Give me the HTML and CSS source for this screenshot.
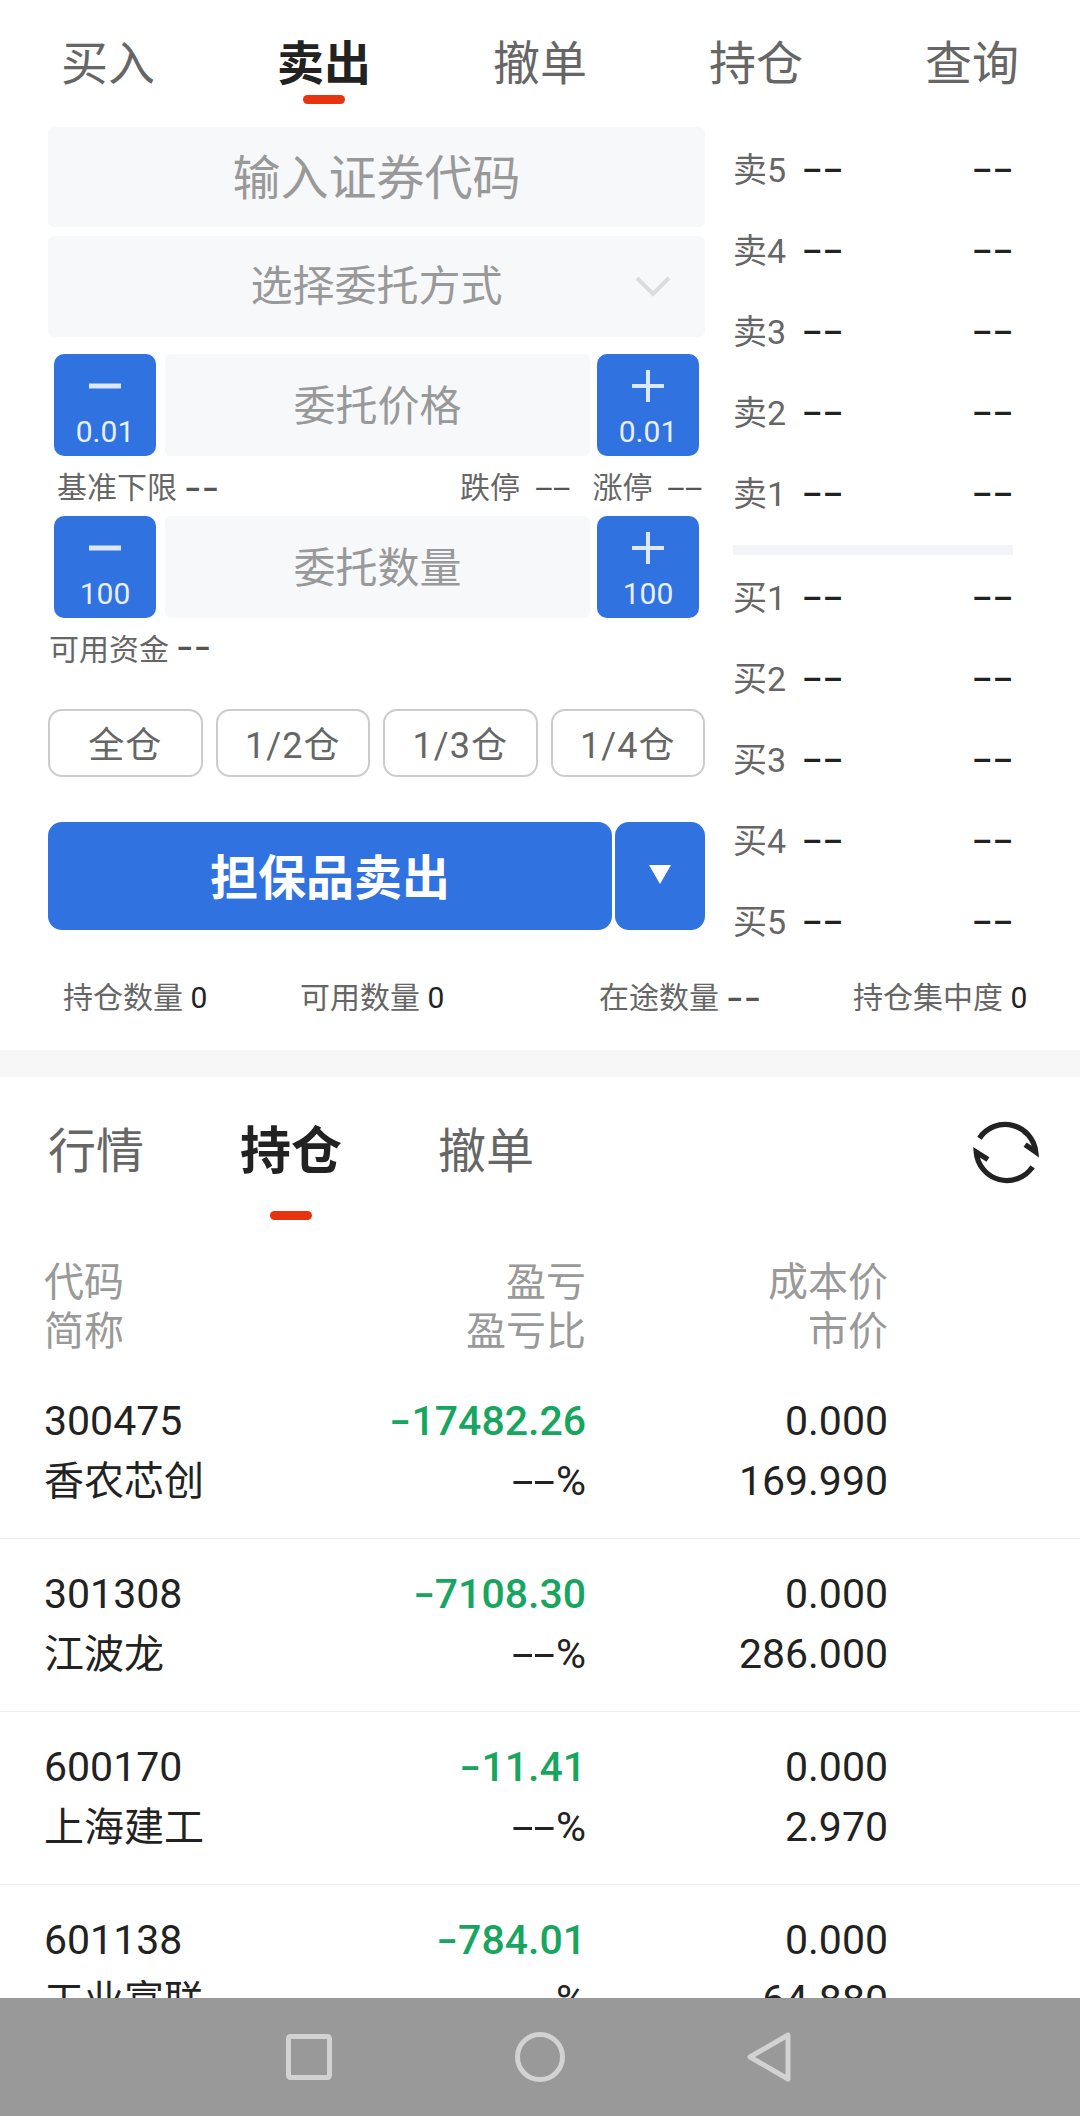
FILE: index.html
```html
<!DOCTYPE html>
<html lang="zh-CN">
<head>
  <meta charset="UTF-8"/>
  <meta name="viewport" content="width=device-width,initial-scale=1"/>
  <title>担保品卖出</title>
  <link rel="stylesheet" href="styles.css">
</head>
<body>
  <div class="page">
    <div class="top-tabs">
      <div class="top-tab">买入</div>
      <div class="top-tab active">卖出</div>
      <div class="top-tab">撤单</div>
      <div class="top-tab">持仓</div>
      <div class="top-tab">查询</div>
    </div>

    <div class="trade">
      <div class="form">
        <div class="field code-field">输入证券代码</div>
        <div class="field mode-field">选择委托方式
          <svg class="chevron" width="36" height="22" viewBox="0 0 36 22"><path d="M2 3 L18 19 L34 3" fill="none" stroke="#dcdcdc" stroke-width="4"/></svg>
        </div>

        <div class="stepper">
          <div class="step-btn">
            <svg width="34" height="34" viewBox="0 0 34 34"><path d="M1 17H33" stroke="#dbe8ff" stroke-width="5"/></svg>
            <span>0.01</span>
          </div>
          <div class="step-input">委托价格</div>
          <div class="step-btn">
            <svg width="34" height="34" viewBox="0 0 34 34"><path d="M1 17H33M17 1V33" stroke="#dbe8ff" stroke-width="4"/></svg>
            <span>0.01</span>
          </div>
        </div>
        <div class="limits">
          <span class="limit-base">基准下限 <b class="dash-s">--</b></span>
          <span>跌停 <b class="dash-s light">--</b></span>
          <span>涨停 <b class="dash-s light">--</b></span>
        </div>

        <div class="stepper">
          <div class="step-btn">
            <svg width="34" height="34" viewBox="0 0 34 34"><path d="M1 17H33" stroke="#dbe8ff" stroke-width="5"/></svg>
            <span>100</span>
          </div>
          <div class="step-input">委托数量</div>
          <div class="step-btn">
            <svg width="34" height="34" viewBox="0 0 34 34"><path d="M1 17H33M17 1V33" stroke="#dbe8ff" stroke-width="4"/></svg>
            <span>100</span>
          </div>
        </div>
        <div class="funds">可用资金 <b class="dash-s">--</b></div>

        <div class="ratios">
          <div class="ratio">全仓</div>
          <div class="ratio">1/2仓</div>
          <div class="ratio">1/3仓</div>
          <div class="ratio">1/4仓</div>
        </div>

        <div class="submit-row">
          <div class="submit">担保品卖出</div>
          <div class="submit-more"><i class="caret"></i></div>
        </div>
      </div>

      <div class="book">
        <div class="book-row"><span class="book-label">卖5</span><span class="dash">--</span><span class="dash">--</span></div>
        <div class="book-row"><span class="book-label">卖4</span><span class="dash">--</span><span class="dash">--</span></div>
        <div class="book-row"><span class="book-label">卖3</span><span class="dash">--</span><span class="dash">--</span></div>
        <div class="book-row"><span class="book-label">卖2</span><span class="dash">--</span><span class="dash">--</span></div>
        <div class="book-row"><span class="book-label">卖1</span><span class="dash">--</span><span class="dash">--</span></div>
        <div class="book-sep"></div>
        <div class="book-row"><span class="book-label">买1</span><span class="dash">--</span><span class="dash">--</span></div>
        <div class="book-row"><span class="book-label">买2</span><span class="dash">--</span><span class="dash">--</span></div>
        <div class="book-row"><span class="book-label">买3</span><span class="dash">--</span><span class="dash">--</span></div>
        <div class="book-row"><span class="book-label">买4</span><span class="dash">--</span><span class="dash">--</span></div>
        <div class="book-row"><span class="book-label">买5</span><span class="dash">--</span><span class="dash">--</span></div>
      </div>
    </div>

    <div class="stats">
      <span>持仓数量 <em>0</em></span>
      <span>可用数量 <em>0</em></span>
      <span>在途数量 <b class="dash-s">--</b></span>
      <span>持仓集中度 <em>0</em></span>
    </div>

    <div class="gap-bar"></div>

    <div class="sub-tabs">
      <div class="sub-tab">行情</div>
      <div class="sub-tab active">持仓</div>
      <div class="sub-tab">撤单</div>
      <svg class="refresh" width="68" height="68" viewBox="0 0 64 64" fill="none" stroke="#222" stroke-width="5">
        <path d="M7 19 A29 29 0 0 1 60 32 L50 25"/>
        <path d="M57 46 A29 29 0 0 1 4 32 L15 39"/>
      </svg>
    </div>

    <div class="holdings">
      <div class="head">
        <div>代码<br>简称</div>
        <div class="num">盈亏<br>盈亏比</div>
        <div class="num">成本价<br>市价</div>
      </div>

      <div class="row">
        <div>300475<br><span class="name">香农芯创</span></div>
        <div class="num"><span class="green"><i class="minus">-</i>17482.26</span><br><i class="pct">--</i>%</div>
        <div class="num">0.000<br>169.990</div>
      </div>
      <div class="row">
        <div>301308<br><span class="name">江波龙</span></div>
        <div class="num"><span class="green"><i class="minus">-</i>7108.30</span><br><i class="pct">--</i>%</div>
        <div class="num">0.000<br>286.000</div>
      </div>
      <div class="row">
        <div>600170<br><span class="name">上海建工</span></div>
        <div class="num"><span class="green"><i class="minus">-</i>11.41</span><br><i class="pct">--</i>%</div>
        <div class="num">0.000<br>2.970</div>
      </div>
      <div class="row">
        <div>601138<br><span class="name">工业富联</span></div>
        <div class="num"><span class="green"><i class="minus">-</i>784.01</span><br><i class="pct">--</i>%</div>
        <div class="num">0.000<br>64.880</div>
      </div>
    </div>

    <div class="navbar">
      <svg width="50" height="50" viewBox="0 0 50 50" fill="none" stroke="#d2d2d2" stroke-width="5"><rect x="4.5" y="4.5" width="41" height="41" rx="2"/></svg>
      <svg width="50" height="50" viewBox="0 0 50 50" fill="none" stroke="#d2d2d2" stroke-width="5"><circle cx="25" cy="25" r="22.5"/></svg>
      <svg width="50" height="50" viewBox="0 0 50 50" fill="none" stroke="#d2d2d2" stroke-width="5" stroke-linejoin="round"><path d="M42 3 V47 L4 25 Z"/></svg>
    </div>
  </div>
</body>
</html>
```

FILE: styles.css
```css
*, *::before, *::after { box-sizing: border-box; margin:0; padding:0 }
html, body { height:100%; overflow:hidden }
body {
  font-family:Roboto,"Noto Sans CJK SC",sans-serif;
  background:#fff;
  color:#222;
}
.page {
  width:1080px; height:2116px;
  display:flex; flex-direction:column;
  overflow:hidden;
}

/* top tabs */
.top-tabs {
  height:127px; flex:none;
  display:grid; grid-template-columns:repeat(5,216px);
}
.top-tab {
  display:flex; flex-direction:column; align-items:center;
  padding-top:38px;
  font-size:47px; line-height:52px;
  color:#666;
}
.top-tab.active { color:#222; font-weight:700; }
.top-tab.active::after {
  content:'';
  width:42px; height:9px;
  margin-top:5px;
  border-radius:5px;
  background:#e8340e;
}

/* order form */
.trade { display:flex; height:835px; flex:none; }
.form { width:657px; margin-left:48px; flex:none; }
.field {
  position:relative;
  display:flex; align-items:center; justify-content:center;
  padding-bottom:6px;
  background:#f7f8fa;
  border-radius:6px;
  color:#999;
}
.code-field { height:100px; font-size:48px; }
.mode-field { height:101px; margin-top:9px; padding-bottom:8px; font-size:42px; }
.chevron { position:absolute; left:587px; top:39px; }
.stepper {
  display:flex;
  height:102px;
  padding:0 6px;
}
.mode-field + .stepper { margin-top:17px; }
.step-btn {
  width:102px; flex:none;
  display:flex; flex-direction:column; align-items:center;
  padding-top:15px;
  background:#2f72e0;
  border-radius:10px;
  color:#e8f0ff;
  font-size:30px; line-height:32px;
}
.step-btn span { margin-top:13px; }
.step-input {
  flex:1;
  margin:0 7px 0 9px;
  padding-bottom:5px;
  display:flex; align-items:center; justify-content:center;
  background:#f7f8fa;
  border-radius:6px;
  font-size:42px;
  color:#999;
}
.limits {
  height:60px;
  display:flex; align-items:center; gap:20px;
  padding-left:9px;
  padding-bottom:2px;
  font-size:30px; color:#666;
}
.limit-base { margin-right:auto; }
.dash-s {
  display:inline-block;
  width:28px;
  font-family:Roboto,sans-serif; font-weight:700;
  color:#555;
  transform:scaleX(1.5);
  transform-origin:0 50%;
}
.dash-s.light { font-weight:400; width:38px; margin-left:7px; transform:scaleX(2.15); }
.funds {
  height:62px;
  display:flex; align-items:center; gap:7px;
  padding-left:1px;
  padding-bottom:5px;
  font-size:30px; color:#666;
}
.ratios {
  display:grid; grid-template-columns:repeat(4,1fr); gap:13px;
  margin-top:29px;
}
.ratio {
  height:68px;
  display:flex; align-items:center; justify-content:center;
  padding-bottom:2px;
  border:2px solid #ccc;
  border-radius:14px;
  font-size:36px; color:#666;
  letter-spacing:1px;
}
.submit-row { display:flex; gap:3px; margin-top:45px; }
.submit {
  width:564px; height:108px;
  display:flex; align-items:center; justify-content:center;
  padding-bottom:5px;
  background:#2f72e0;
  border-radius:14px;
  font-size:48px; font-weight:700;
  color:#fff;
}
.submit-more {
  flex:1;
  display:flex; align-items:center; justify-content:center;
  padding-bottom:4px;
  background:#2f72e0;
  border-radius:14px;
}
.caret {
  width:0; height:0;
  border-left:11px solid transparent;
  border-right:11px solid transparent;
  border-top:19px solid #fff;
}

/* five-level quote */
.book { width:280px; margin-left:28px; flex:none; }
.book-row {
  height:81px;
  display:flex; align-items:center;
}
.book-label { width:69px; font-size:34px; color:#666; }
.dash {
  width:36px;
  font-size:33px; font-weight:500;
  color:#222;
  transform:translateY(2px) scaleX(1.85);
  transform-origin:0 50%;
}
.dash:last-child { margin-left:auto; margin-right:5px; }
.book-sep { height:10px; margin-top:13px; background:#f3f4f8; }

.stats {
  height:88px; flex:none;
  display:grid; grid-template-columns:237px 299px 254px 1fr;
  align-items:center;
  padding:0 0 22px 63px;
  font-size:30px; color:#666;
}
.stats em { font-style:normal; color:#222; font-size:30px; }
.gap-bar { height:27px; flex:none; background:#f7f7f7; }

/* position tabs */
.sub-tabs {
  position:relative;
  height:181px; flex:none;
  display:flex; gap:96px;
  padding:49px 0 0 48px;
}
.sub-tab { font-size:48px; line-height:52px; color:#666; }
.sub-tab.active {
  position:relative;
  font-size:51px; font-weight:700;
  color:#222;
}
.sub-tab.active::after {
  content:'';
  position:absolute; left:30px; top:85px;
  width:42px; height:9px;
  border-radius:5px;
  background:#e8340e;
}
.refresh { position:absolute; left:972px; top:41px; }

/* holdings list */
.holdings { flex:1; min-height:0; overflow:hidden; }
.head, .row {
  display:grid; grid-template-columns:301px 241px 302px;
  padding-left:44px;
}
.head { font-size:40px; line-height:49px; color:#999; margin-bottom:10px; }
.row {
  height:173px;
  padding-top:25px;
  border-bottom:1px solid #f0f0f0;
  font-size:41px; line-height:60px;
  color:#222;
}
.num { text-align:right; }
.name { font-size:40px; }
.green { color:#18a55f; font-weight:500; }
.minus {
  display:inline-block;
  width:21px;
  font-style:normal;
  text-align:left;
  transform:scaleX(1.5);
  transform-origin:0 50%;
}
.pct {
  display:inline-block;
  width:44px;
  font-style:normal;
  text-align:left;
  transform:scaleX(1.9);
  transform-origin:0 50%;
}

.navbar {
  height:118px; flex:none;
  display:flex; align-items:center; justify-content:center; gap:181px;
  background:#999;
}
```
